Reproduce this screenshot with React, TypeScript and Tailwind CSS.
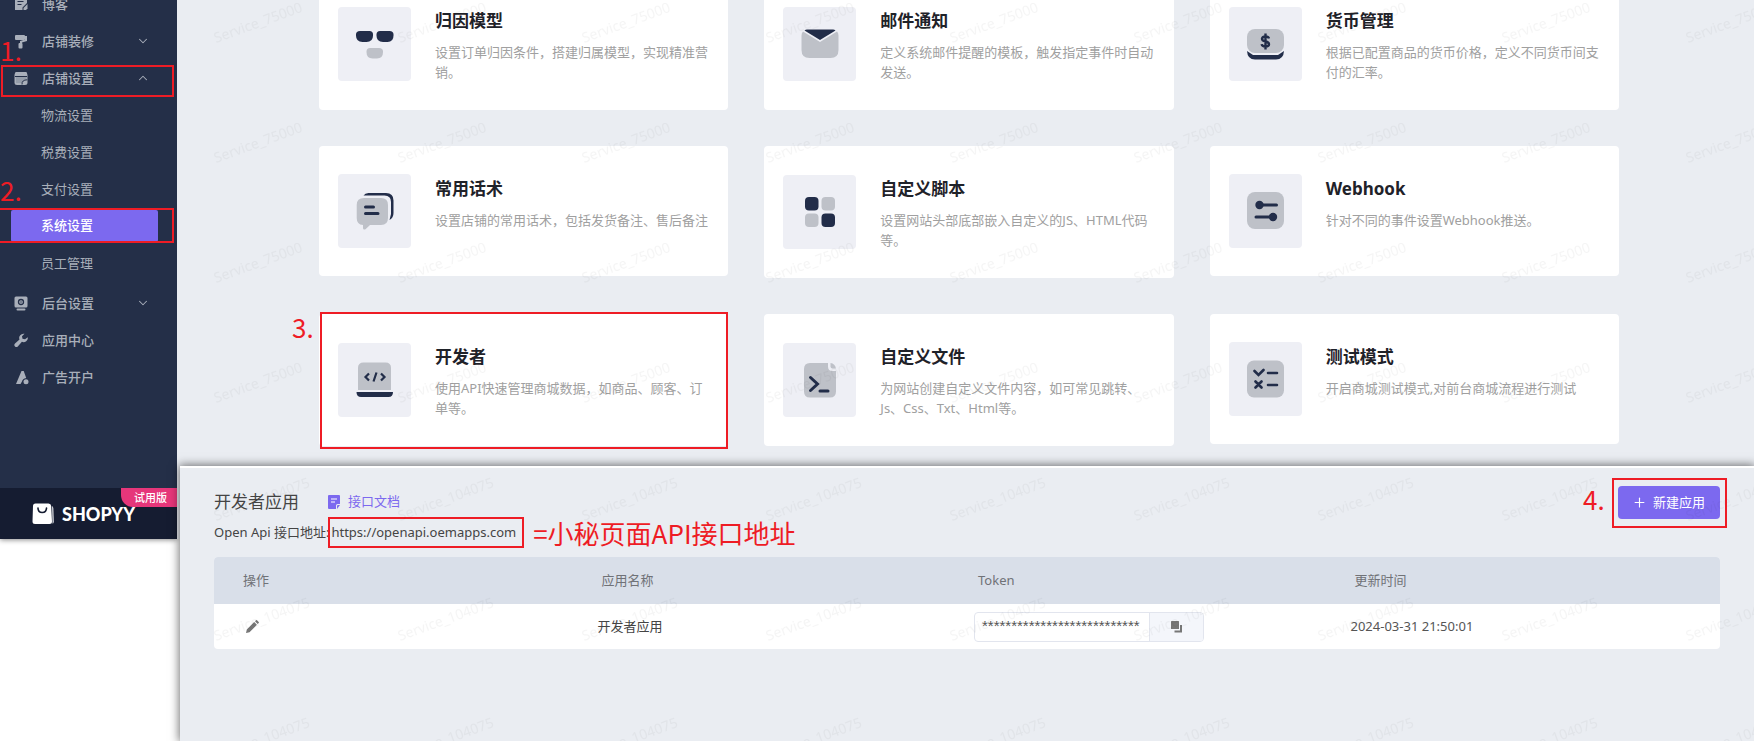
import React from 'react';
import clsx from 'clsx';
import { ChevronDown, ChevronUp, Plus } from 'lucide-react';

interface MenuItem {
  label: string;
  icon: React.ReactNode;
  arrow?: 'up' | 'down';
  mark?: string;
}

interface Setting {
  title: string;
  desc: string;
  icon: React.ReactNode;
  mark?: string;
}

const DARK = '#222d49';
const GREY = '#bec1c8';

const topMenu: MenuItem[] = [
  {
    label: '博客',
    icon: (
      <>
        <path d="M1 1h12v5L8.500 10.500V13H1z" />
        <path d="M3.500 4.500h6M3.500 7.500h4" stroke="#242f48" strokeWidth="1.200" />
        <path d="M9.500 11l4-4v4.500L12 13H9.500z" />
      </>
    ),
  },
  {
    label: '店铺装修',
    arrow: 'down',
    icon: (
      <>
        <rect x="1" y="1" width="10" height="5" rx="1" />
        <path d="M11 2h2v5L8 8.500V10H6V7l5-1.500z" />
        <rect x="4.500" y="9" width="4" height="5.500" rx="1" />
      </>
    ),
  },
  {
    label: '店铺设置',
    arrow: 'up',
    mark: '1.',
    icon: (
      <>
        <path d="M2 1h10q.5 0 .8.600L13.500 4v7.500q0 2.500-2.500 2.500H3Q.5 14 .5 11.500V4l.7-2.400Q1.500 1 2 1z" />
        <path d="M2 5.500h10.500v3.200Q8.500 8.200 8 12H2z" fill="#242f48" opacity="0.150" />
        <path d="M1 5.500h12M8 13.500q-.3-4.700 5.300-4.700" fill="none" stroke="#242f48" strokeWidth="1" />
      </>
    ),
  },
];

const subMenu = ['物流设置', '税费设置', '支付设置', '系统设置', '员工管理'];

const bottomMenu: MenuItem[] = [
  {
    label: '后台设置',
    arrow: 'down',
    icon: (
      <>
        <rect x="0.500" y="0.500" width="13" height="11" rx="1.500" />
        <rect x="2.500" y="12.500" width="9" height="2" rx="1" />
        <circle cx="7" cy="6" r="2.500" fill="none" stroke="#242f48" strokeWidth="1.300" />
        <circle cx="7" cy="6" r="0.700" fill="#242f48" />
      </>
    ),
  },
  {
    label: '应用中心',
    icon: (
      <path d="M13.800 4.200a4.300 4.300 0 0 1-5.900 4.600L3.800 13.400a1.900 1.900 0 0 1-2.800-2.800l4.500-4A4.300 4.300 0 0 1 10.500.8L8 3.200l.5 2.500 2.500.5z" />
    ),
  },
  {
    label: '广告开户',
    icon: (
      <>
        <path d="M7.500 1h2.200l2.500 7q-3.700.5-4.200 3.500L6.500 14H2z" />
        <circle cx="12" cy="11.800" r="2.500" />
      </>
    ),
  },
];

const settings: Setting[] = [
  {
    title: '归因模型',
    desc: '设置订单归因条件，搭建归属模型，实现精准营销。',
    icon: (
      <>
        <path d="M22 24h9.500q3.500 0 3.500 3.500v1Q35 35 28.500 35h-4Q18 35 18 28.500v-1Q18 24 22 24z" fill={DARK} />
        <path d="M42 24h9.500q4 0 4 3.500v1q0 6.500-6 6.500h-4.500q-6.500 0-6.500-6.500v-1q0-3.500 3.500-3.500z" fill={DARK} />
        <path d="M32 41h9q4 0 4 3.500v.5q0 6.500-6 6.500h-4.500q-6 0-6-6.500v-.5q0-3.500 3.500-3.500z" fill={GREY} />
      </>
    ),
  },
  {
    title: '邮件通知',
    desc: '定义系统邮件提醒的模板，触发指定事件时自动发送。',
    icon: (
      <>
        <path d="M20 24.500L37 35l17-10.500q1.500 1.500 1.500 4V43q0 8-8 8h-21q-8 0-8-8V28.500q0-2.500 1.500-4z" fill={GREY} />
        <path d="M24 22.500h26q1.500 0 2.500 1L37 33 21.500 23.500q1-1 2.500-1z" fill={DARK} />
      </>
    ),
  },
  {
    title: '货币管理',
    desc: '根据已配置商品的货币价格，定义不同货币间支付的汇率。',
    icon: (
      <>
        <rect x="18" y="22" width="37" height="24" rx="8" fill={GREY} />
        <path d="M18 44l6 4h25l6-4q-.5 8.500-8 8.500H26q-7.500 0-8-8.500z" fill={DARK} />
        <path d="M40 31.500q-.5-2-3.500-2t-3.500 2.300q0 2 3.500 2.700t3.500 2.800q0 2.200-3.500 2.200t-3.800-2.300M36.500 26.500v16" fill="none" stroke={DARK} strokeWidth="2.400" />
      </>
    ),
  },
  {
    title: '常用话术',
    desc: '设置店铺的常用话术，包括发货备注、售后备注',
    icon: (
      <>
        <path d="M25.500 21.500q1.500-2.500 5-2.500H48q7.500 0 7.500 7.500V39q0 5-4 7l1.500-6V28q0-6.500-6.500-6.500z" fill={DARK} />
        <path d="M26 24h17q7 0 7 7v13q0 7-7 7H32l-4.500 4.200q-2.500 1-2.500-1.200v-3q-6.300-.5-6.300-7V31q0-7 7.300-7z" fill={GREY} />
        <path d="M27.500 33h8M27.500 39.500h12.500" stroke={DARK} strokeWidth="3" strokeLinecap="round" />
      </>
    ),
  },
  {
    title: '自定义脚本',
    desc: '设置网站头部底部嵌入自定义的JS、HTML代码等。',
    icon: (
      <>
        <rect x="22" y="22" width="13.500" height="13.500" rx="4" fill={DARK} />
        <rect x="38.500" y="22" width="13.500" height="13.500" rx="4" fill={GREY} />
        <rect x="22" y="38.500" width="13.500" height="13.500" rx="4" fill={GREY} />
        <rect x="38.500" y="38.500" width="13.500" height="13.500" rx="4" fill={DARK} />
      </>
    ),
  },
  {
    title: 'Webhook',
    desc: '针对不同的事件设置Webhook推送。',
    icon: (
      <>
        <rect x="18" y="18" width="37" height="37" rx="8" fill={GREY} />
        <path d="M30 31h17.500M27 43h18" stroke={DARK} strokeWidth="3" strokeLinecap="round" />
        <circle cx="30.500" cy="31" r="4.200" fill={DARK} />
        <circle cx="44" cy="43" r="4.200" fill={DARK} />
      </>
    ),
  },
  {
    title: '开发者',
    desc: '使用API快速管理商城数据，如商品、顾客、订单等。',
    mark: '3.',
    icon: (
      <>
        <path d="M20 47V25q0-5.500 5.500-5.500h22q5.500 0 5.500 5.500v22z" fill={GREY} />
        <path d="M18.500 49H55q0 5-4.500 5H23q-4.500 0-4.500-5z" fill={DARK} />
        <path d="M31 30.500L27.500 34l3.500 3.500M43 30.500l3.500 3.500-3.500 3.500M38.500 29.500l-3 9" fill="none" stroke={DARK} strokeWidth="2.200" />
      </>
    ),
  },
  {
    title: '自定义文件',
    desc: '为网站创建自定义文件内容，如可常见跳转、Js、Css、Txt、Html等。',
    icon: (
      <>
        <path d="M27 20h18v3.500q0 4.500 4.500 4.500H53v20.500q0 6-6 6H27q-6 0-6-6V26q0-6 6-6z" fill={GREY} />
        <path d="M47.500 20q4.500.5 5.500 5.500h-3.500q-2 0-2-2z" fill={GREY} />
        <path d="M27.500 34.500l7 6.500-7 6.500M37 48h8" fill="none" stroke={DARK} strokeWidth="3" strokeLinecap="round" />
      </>
    ),
  },
  {
    title: '测试模式',
    desc: '开启商城测试模式,对前台商城流程进行测试',
    icon: (
      <>
        <rect x="18" y="18.500" width="37" height="37" rx="7" fill={GREY} />
        <path d="M25.500 29l4 4 5-5M39 31h9M26.500 39.500l6 6M32.500 39.500l-6 6M39 43h9" fill="none" stroke={DARK} strokeWidth="2.600" strokeLinecap="round" />
      </>
    ),
  },
];

// Red step number plus the frame around the thing to click
const Mark: React.FC<{ text: string; box: string; label: string }> = ({ text, box, label }) => (
  <>
    <span className={clsx('pointer-events-none absolute z-20 border-2 border-[#ee1c25]', box)} />
    <span className={clsx("pointer-events-none absolute z-20 font-['Noto_Sans_CJK_SC',sans-serif] text-[26px] leading-[26px] font-normal text-[#ee1c25]", label)}>
      {text}
    </span>
  </>
);

const Watermark: React.FC<{ id: string; text: string; x: number; y: number }> = ({ id, text, x, y }) => (
  <svg className="pointer-events-none absolute inset-0 z-10 h-full w-full" aria-hidden="true">
    <defs>
      <pattern id={id} width="184" height="120" patternUnits="userSpaceOnUse">
        <text x={x} y={y} transform={`rotate(-20 ${x} ${y})`} fontSize="14" fill="#000" fillOpacity="0.04">
          {text}
        </text>
      </pattern>
    </defs>
    <rect width="100%" height="100%" fill={`url(#${id})`} />
  </svg>
);

const MenuLink: React.FC<{ item: MenuItem }> = ({ item }) => (
  <li className="relative">
    <a href="#" className="flex h-[37px] items-center pr-[27px] pl-3.5">
      <svg className="mr-[13px] h-[15px] w-[15px]" viewBox="0 0 15 15" fill="#a9afba">
        {item.icon}
      </svg>
      <span className="flex-1 font-medium">{item.label}</span>
      {item.arrow === 'down' && <ChevronDown size={14} strokeWidth={1.8} className="mb-0.5" />}
      {item.arrow === 'up' && <ChevronUp size={14} strokeWidth={1.8} className="mb-0.5" />}
    </a>
    {item.mark && <Mark text={item.mark} box="top-[5px] right-[3px] bottom-0 left-px" label="-top-[23px] left-0" />}
  </li>
);

const Sidebar: React.FC = () => (
  <aside className="flex w-[177px] shrink-0 flex-col bg-[#242f48] text-[13px] text-[#a9afba] shadow-[0_1px_5px_rgba(0,0,0,0.45)]">
    <nav className="-mt-3.5 flex-1 pb-[92px]">
      <ul>
        {topMenu.map((item) => (
          <MenuLink key={item.label} item={item} />
        ))}
      </ul>
      <ul className="mb-[3px]">
        {subMenu.map((label) =>
          label === '系统设置' ? (
            <li key={label} className="relative pt-0.5 pr-[19px] pb-[3px] pl-[11px]">
              <a href="#" className="flex h-8 items-center rounded-xs bg-[#7c69ef] pl-[30px] font-medium text-white">
                {label}
              </a>
              <Mark text="2." box="top-0 right-[3px] bottom-0.5 -left-[2px]" label="-top-[31px] left-0" />
            </li>
          ) : (
            <li key={label}>
              <a href="#" className="flex h-[37px] items-center pl-[41px]">{label}</a>
            </li>
          )
        )}
      </ul>
      <ul>
        {bottomMenu.map((item) => (
          <MenuLink key={item.label} item={item} />
        ))}
      </ul>
    </nav>
    <div className="relative flex h-[51px] items-center gap-2 bg-[#151c31] pl-8">
      <svg className="h-[22px] w-[22px]" viewBox="0 0 22 22">
        <path d="M1 3q0-2.500 2.500-2.500h13q2.500 0 2.700 2.500L20 18.500q0 2.500-2.500 2.500H3q-2.500 0-2.500-2.500z" fill="#fff" />
        <path d="M20 3q1.300.5 1.400 2.500l.5 13q0 1.800-1.400 2.300z" fill="#c9cbd2" />
        <path d="M6 5q0 4.500 4.200 4.500T14.500 5" fill="none" stroke="#151c31" strokeWidth="1.600" strokeLinecap="round" />
      </svg>
      <span className="font-['Lato',sans-serif] text-[18px] leading-6 font-black text-white">SHOPYY</span>
      <span className="absolute top-0 right-0 rounded-bl-xl bg-[#e6367a] pr-2.5 pl-[13px] text-[11px] leading-[19px] font-medium text-white">
        试用版
      </span>
    </div>
  </aside>
);

const SettingCard: React.FC<{ item: Setting }> = ({ item }) => (
  <a href="#" className="relative flex gap-6 rounded-sm bg-white pt-7 pr-[17px] pb-7 pl-[19px]">
    <svg className="h-[74px] w-[73px] shrink-0 self-center rounded-sm bg-[#eeeff5]" viewBox="0 0 73 74">
      {item.icon}
    </svg>
    <div className="flex-1">
      <h3 className="text-[17px] leading-[29px] font-bold text-[#1f2229]">{item.title}</h3>
      <p className="mt-[7px] text-[13px] leading-5 text-[#a0a0a0]">{item.desc}</p>
    </div>
    {item.mark && <Mark text={item.mark} box="-top-[2px] right-0 -bottom-[3px] left-px" label="top-0 -left-[27px]" />}
  </a>
);

const DeveloperPanel: React.FC = () => (
  <section className="relative z-30 -mt-[73px] ml-[180px] flex-1 border-t-2 border-white bg-[#eaedf2] pt-[18px] pr-[34px] pb-[92px] pl-[34px] shadow-[0_0_9px_1px_rgba(0,0,0,0.55)]">
    <header className="flex items-start justify-between">
      <div>
        <div className="flex h-[31px] items-center">
          <h2 className="text-[17px] text-[#444]">开发者应用</h2>
          <a href="#" className="ml-[29px] flex items-center gap-2 text-[13px] text-[#7c69ef]">
            <svg className="h-3.5 w-3" viewBox="0 0 12 14">
              <path d="M1 0h10q1 0 1 1v8H9.500Q8 9 8 10.500V14H1q-1 0-1-1V1q0-1 1-1z" fill="#7c69ef" />
              <path d="M9 14v-3q0-1 1-1h2z" fill="#7c69ef" />
              <path d="M3 4h6M3 7h4" stroke="#fff" strokeWidth="1.200" />
            </svg>
            接口文档
          </a>
        </div>
        <p className="flex h-[31px] items-center text-[13px] whitespace-nowrap text-[#444]">
          Open Api 接口地址:
          <span className="-ml-px flex h-[31px] items-center border-2 border-[#ee1c25] pr-1.5 pl-px">https://openapi.oemapps.com</span>
          <span className="ml-[9px] font-['Noto_Sans_CJK_SC',sans-serif] text-[26px] leading-[31px] text-[#ee1c25]">
            =小秘页面API接口地址
          </span>
        </p>
      </div>
      <div className="relative">
        <button type="button" className="flex h-[33px] items-center gap-1.5 rounded-sm bg-[#7c69ef] pr-[15px] pl-3.5 text-[13px] text-white">
          <Plus size={15} strokeWidth={1.8} />
          新建应用
        </button>
        <Mark text="4." box="-top-2 -right-[7px] -bottom-[9px] -left-[6px]" label="top-0 -left-[35px]" />
      </div>
    </header>

    <table className="mt-[9px] w-full table-fixed overflow-hidden rounded-sm bg-white text-left text-[13px] text-[#555]">
      <thead>
        <tr className="h-[47px] bg-[#d9dfe9] text-[#707277]">
          <th className="pl-[29px] font-normal">操作</th>
          <th className="pl-[11px] font-normal">应用名称</th>
          <th className="pl-[11px] font-normal">Token</th>
          <th className="pl-[11px] font-normal">更新时间</th>
        </tr>
      </thead>
      <tbody>
        <tr className="h-[45px]">
          <td className="pl-[32px]">
            <button type="button" aria-label="编辑" className="block">
              <svg className="h-[13px] w-[13px]" viewBox="0 0 13 13" fill="#777">
                <path d="M0 13l.8-3.500 7.400-7.400 2.700 2.700-7.400 7.400zM9 1.300l1-1q.5-.5 1 0l1.700 1.700q.5.500 0 1l-1 1z" />
              </svg>
            </button>
          </td>
          <td className="pl-[7px] text-[#444]">开发者应用</td>
          <td className="pl-[7px]">
            <div className="flex h-[30px] w-[230px] overflow-hidden rounded-sm border border-[#e2e5ee]">
              <input
                readOnly
                aria-label="Token"
                value="***************************"
                className="min-w-0 flex-1 pl-[7px] font-['Liberation_Sans',sans-serif] text-[15px] text-[#555] outline-none"
              />
              <button type="button" aria-label="复制" className="flex w-[54px] items-center justify-center border-l border-[#e2e5ee] bg-[#f4f6fb]">
                <svg className="h-3 w-3" viewBox="0 0 12 12" fill="#777">
                  <rect width="8" height="8" rx="0.500" />
                  <path d="M9 4h2v7.500H3.500v-2H9z" />
                </svg>
              </button>
            </div>
          </td>
          <td className="pl-[7px]">2024-03-31 21:50:01</td>
        </tr>
      </tbody>
    </table>
    <Watermark id="wm-panel" text="Service_104075" x={36} y={53} />
  </section>
);

const App: React.FC = () => {
  return (
    <div className="flex min-h-screen flex-col overflow-hidden bg-white font-['Noto_Sans','Noto_Sans_CJK_SC',sans-serif]">
      <div className="flex">
        <Sidebar />
        <main className="relative flex-1 bg-[#eaedf2]">
          <div className="-mt-[22px] grid grid-cols-3 items-start gap-9 pr-[135px] pl-[142px]">
            {settings.map((item) => (
              <SettingCard key={item.title} item={item} />
            ))}
          </div>
          <Watermark id="wm-main" text="Service_75000" x={39} y={43} />
        </main>
      </div>
      <DeveloperPanel />
    </div>
  );
};

export default App;
